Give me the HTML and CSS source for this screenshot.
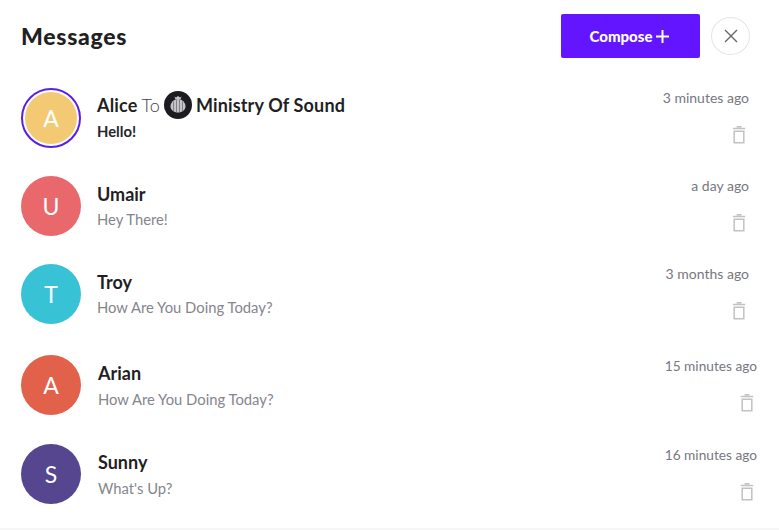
FILE: index.html
```html
<!DOCTYPE html>
<html lang="en">
<head>
  <meta charset="UTF-8">
  <title>Messages</title>
  <link rel="stylesheet" href="styles.css">
</head>
<body>

<svg width="0" height="0" class="icon-defs">
  <symbol id="trash" viewBox="0 0 14 18">
    <path d="M2.2 5.2h9.6v11.6H2.2z M0.8 2.6h12.4 M4.6 0.8h4.8" fill="none" stroke="currentColor" stroke-width="1.5"/>
  </symbol>
</svg>

<div class="messages">
  <div class="header">
    <div class="title">Messages</div>
    <div class="header-actions">
      <button type="button" class="compose-btn">Compose
        <svg class="plus" width="13" height="13" viewBox="0 0 13 13"><path d="M6.500 0v13M0 6.500h13" stroke="#fff" stroke-width="2" fill="none"/></svg>
      </button>
      <button type="button" class="close-btn" aria-label="Close">
        <svg width="14" height="14" viewBox="0 0 14 14"><path d="M1 1l12 12M13 1L1 13" stroke="#666" stroke-width="1.4" fill="none"/></svg>
      </button>
    </div>
  </div>

  <!-- Unread message -->
  <div class="row row-first">
    <div class="avatar avatar-alice"><span class="avatar-inner">A</span></div>
    <div class="body">
      <div class="name">Alice <span class="to">To</span>
        <svg class="logo" width="28" height="28" viewBox="0 0 28 28">
          <circle cx="14" cy="14" r="14" fill="#1c1c20"/>
          <path d="M6.500 15.500a7.500 7.500 0 0 1 15 0c0 3.400-3.400 6-7.500 6s-7.500-2.600-7.500-6z" fill="#c4c4c6"/>
          <path d="M10.500 5.500l1.500 1 2-1.500 2 1.500 1.500-1-0.800 2.500h-5.400z" fill="#c4c4c6"/>
          <path d="M9.500 10.500v10M12.500 9v12.500M15.500 9v12.500M18.500 10.500v10" stroke="#55555a" stroke-width="0.6"/>
        </svg>
        Ministry Of Sound</div>
      <div class="text text-unread">Hello!</div>
    </div>
    <div class="meta">
      <div class="time">3 minutes ago</div>
      <svg class="trash"><use href="#trash"/></svg>
    </div>
  </div>

  <div class="row">
    <div class="avatar avatar-umair">U</div>
    <div class="body">
      <div class="name">Umair</div>
      <div class="text">Hey There!</div>
    </div>
    <div class="meta">
      <div class="time">a day ago</div>
      <svg class="trash"><use href="#trash"/></svg>
    </div>
  </div>

  <div class="row">
    <div class="avatar avatar-troy">T</div>
    <div class="body">
      <div class="name">Troy</div>
      <div class="text">How Are You Doing Today?</div>
    </div>
    <div class="meta">
      <div class="time">3 months ago</div>
      <svg class="trash"><use href="#trash"/></svg>
    </div>
  </div>

  <div class="row row-wide row-arian">
    <div class="avatar avatar-arian">A</div>
    <div class="body">
      <div class="name">Arian</div>
      <div class="text">How Are You Doing Today?</div>
    </div>
    <div class="meta">
      <div class="time">15 minutes ago</div>
      <svg class="trash"><use href="#trash"/></svg>
    </div>
  </div>

  <div class="row row-wide row-sunny">
    <div class="avatar avatar-sunny">S</div>
    <div class="body">
      <div class="name">Sunny</div>
      <div class="text">What's Up?</div>
    </div>
    <div class="meta">
      <div class="time">16 minutes ago</div>
      <svg class="trash"><use href="#trash"/></svg>
    </div>
  </div>
</div>

</body>
</html>
```

FILE: styles.css
```css
body {
  margin: 0;
  font-family: "Lato", "Liberation Sans", sans-serif;
  background-color: #fff;
  color: #1f1f24;
}
.icon-defs {
  display: block;
  height: 0;
}
.messages {
  height: 514px;
  padding: 14px 0 0 21px;
  border-bottom: 2px solid #f6f6f6;
}
.header {
  display: flex;
  justify-content: space-between;
  align-items: center;
  height: 44px;
  padding-right: 29px;
}
.title {
  font-size: 23px;
  font-weight: 900;
  letter-spacing: 0.7px;
}
.header-actions {
  display: flex;
  align-items: center;
  gap: 11px;
}
button {
  cursor: pointer;
  font-family: inherit;
}
.compose-btn {
  display: flex;
  align-items: center;
  justify-content: center;
  gap: 4px;
  width: 139px;
  height: 44px;
  padding: 0 2px 0 0;
  background-color: #6415ff;
  color: #fff;
  font-size: 15px;
  font-weight: 900;
  border: none;
  border-radius: 2px;
}
.close-btn {
  display: flex;
  align-items: center;
  justify-content: center;
  width: 39px;
  height: 38px;
  padding: 0;
  background-color: #fff;
  border: 1px solid #e4e4e4;
  border-radius: 50%;
}
.row {
  display: flex;
  height: 60px;
  margin-top: 28px;
  padding-right: 30px;
}
.row-first {
  margin-top: 30px;
}
.row-wide {
  padding-right: 22px;
}
.row-arian {
  margin-top: 31px;
}
.row-sunny {
  margin-top: 29px;
}
.avatar {
  flex: none;
  display: flex;
  align-items: center;
  justify-content: center;
  width: 60px;
  height: 60px;
  border-radius: 50%;
  color: #fff;
  font-size: 23px;
}
.avatar-alice {
  border: 2px solid #5b1ee6;
  box-sizing: border-box;
}
.avatar-inner {
  display: flex;
  align-items: center;
  justify-content: center;
  width: 52px;
  height: 52px;
  border-radius: 50%;
  background-color: #f4c974;
}
.avatar-umair { background-color: #e9686c; }
.avatar-troy { background-color: #38c2d6; }
.avatar-arian { background-color: #e2614a; }
.avatar-sunny { background-color: #56468f; }
.body {
  flex: 1;
  padding: 6px 0 0 16px;
}
.row-first .body {
  padding-top: 5px;
}
.row-wide .body {
  padding-left: 17px;
}
.name {
  display: flex;
  align-items: center;
  gap: 4px;
  height: 24px;
  font-size: 18px;
  font-weight: 700;
}
.row-first .name {
  letter-spacing: 0.15px;
}
.to {
  font-weight: 300;
  color: #444;
}
.logo {
  flex: none;
}
.text {
  margin-top: 4px;
  font-size: 14.8px;
  color: #85858d;
}
.row-first .text {
  margin-top: 5px;
}
.row-wide .text {
  margin-top: 5px;
}
.text-unread {
  font-weight: 700;
  color: #26262b;
}
.meta {
  display: flex;
  flex-direction: column;
  align-items: flex-end;
}
.row-wide .meta {
  margin-top: 1px;
}
.time {
  margin-top: 1px;
  font-size: 14px;
  color: #77777f;
}
.row-wide .time {
  font-size: 13.7px;
}
.trash {
  width: 14px;
  height: 18px;
  margin: 20px 3px 0 0;
  color: #c2c2c4;
}
```
